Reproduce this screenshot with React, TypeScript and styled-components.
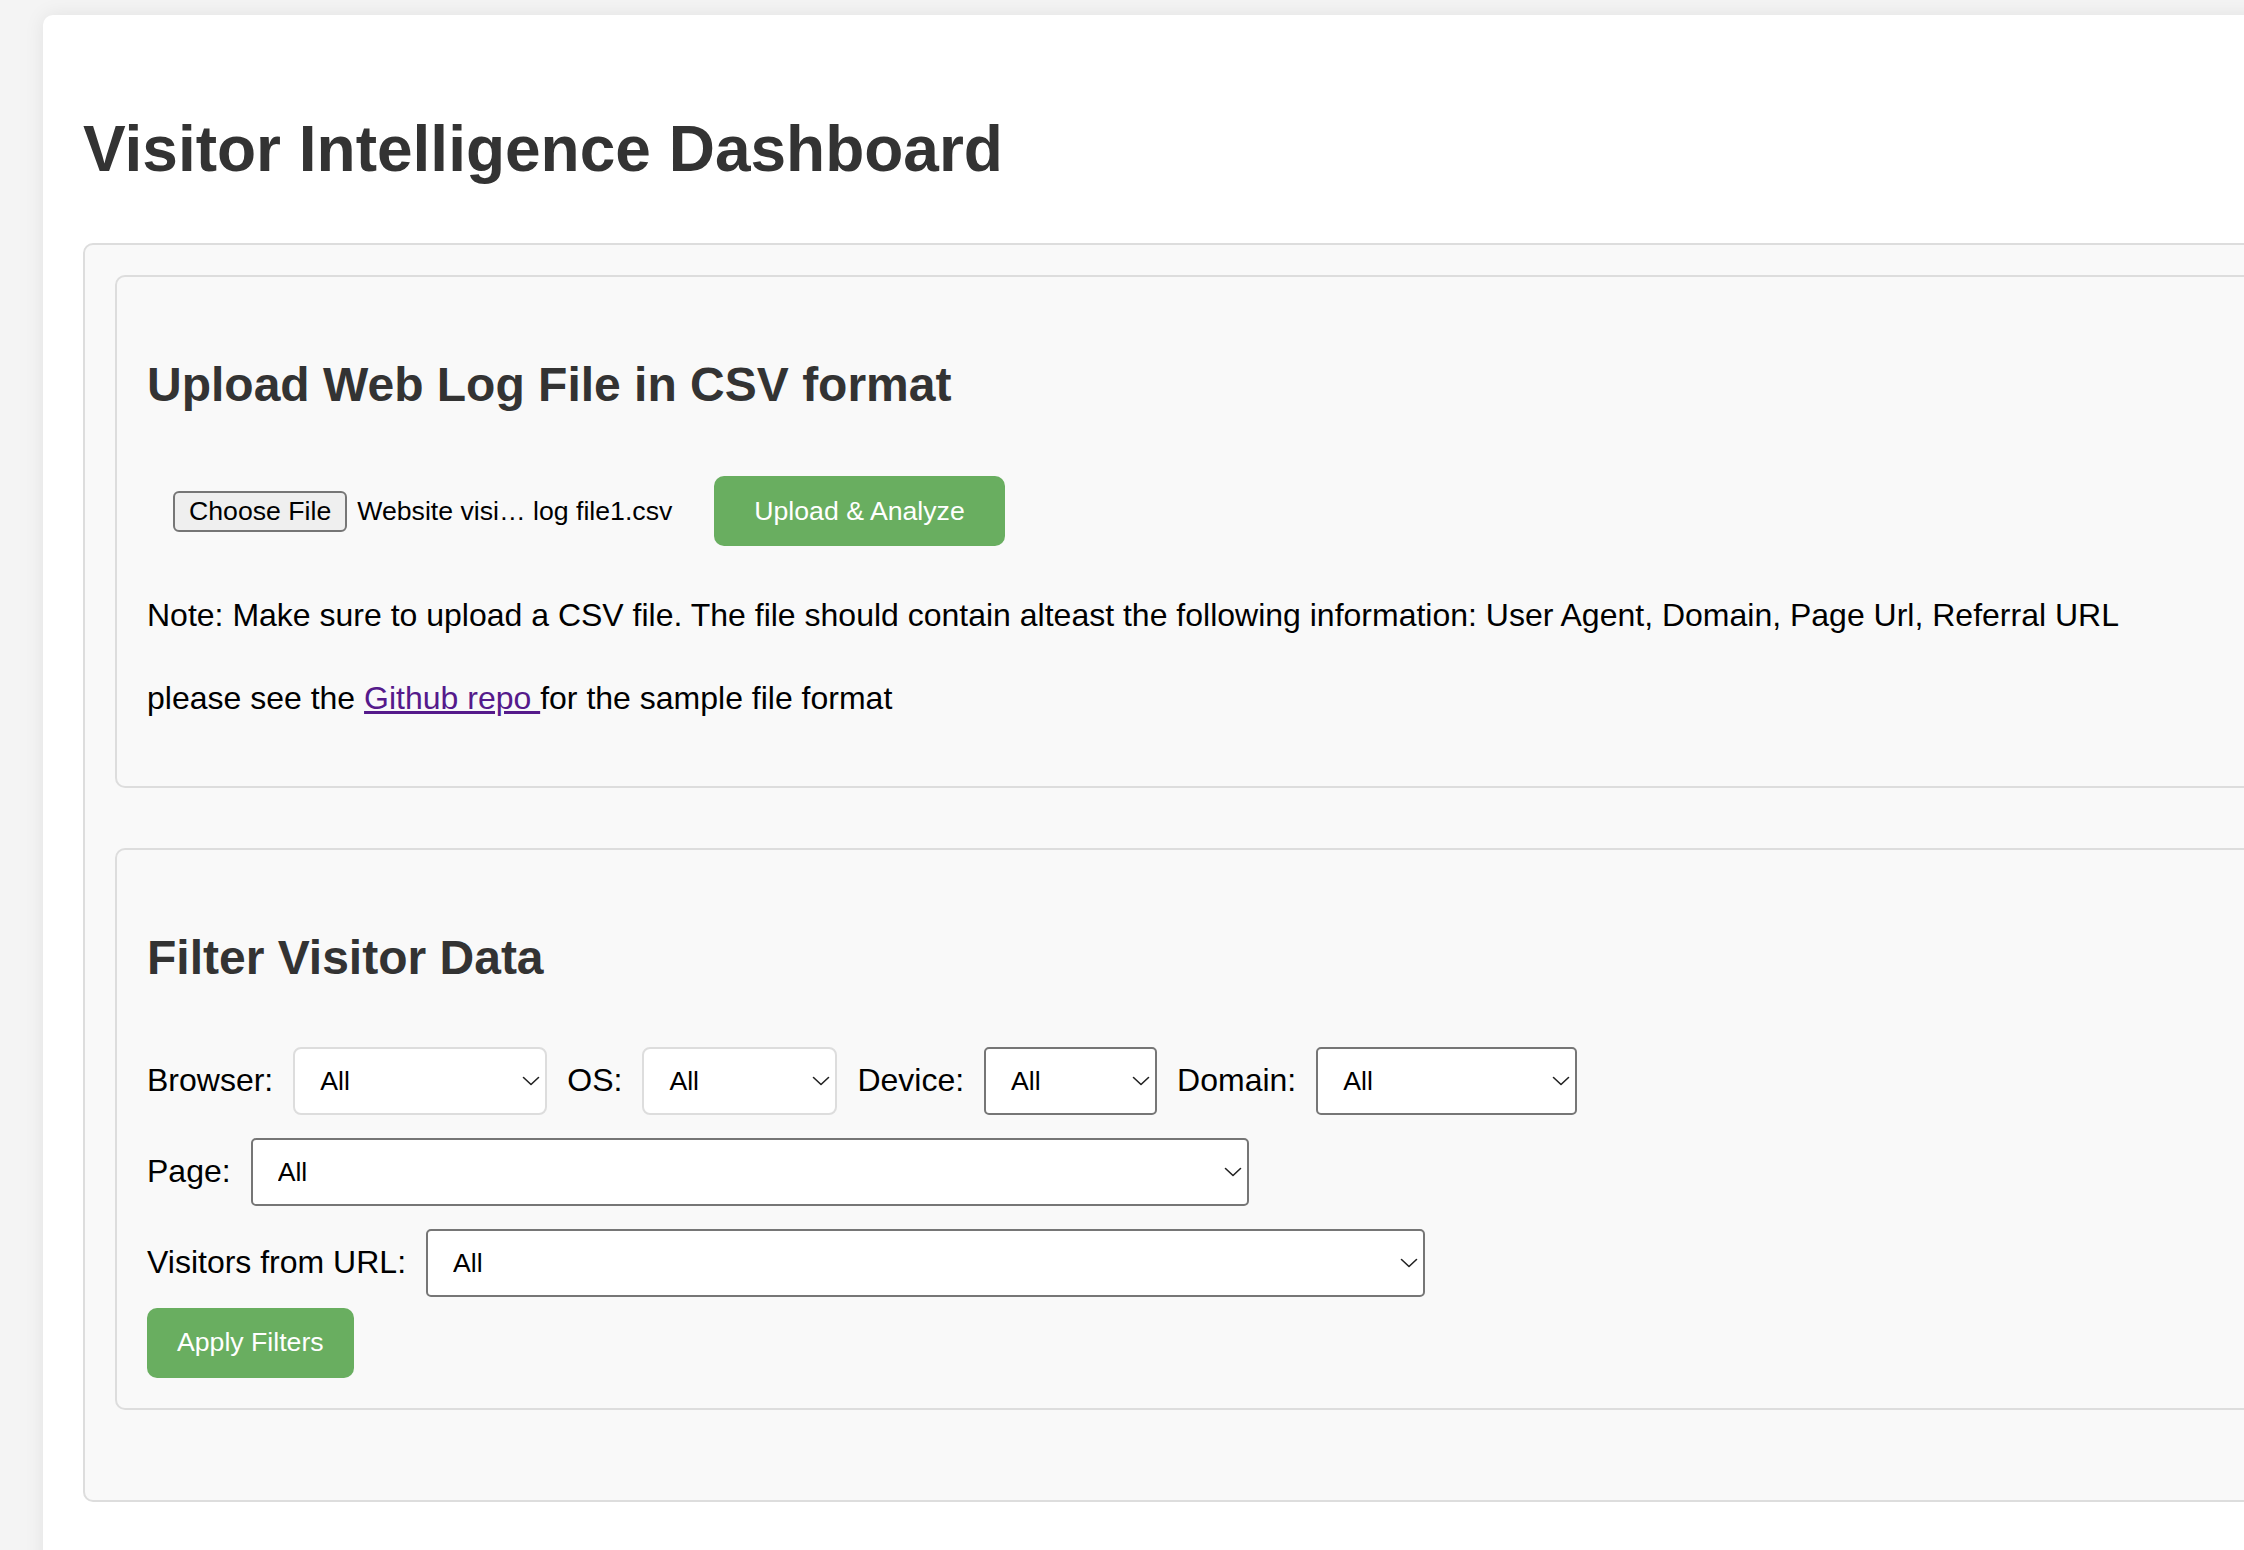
import styled, { createGlobalStyle } from "styled-components";

const GlobalStyle = createGlobalStyle`
  html, body {
    margin: 0;
    padding: 0;
    background: #f4f4f4;
    overflow: hidden;
  }
  body {
    font-family: "Liberation Sans", Arial, Helvetica, sans-serif;
    line-height: 1.6;
    color: #000;
  }
`;

interface FilterField {
  label: string;
  width: number;
  light?: boolean;
}

const filterRows: FilterField[][] = [
  [
    { label: "Browser:", width: 254, light: true },
    { label: "OS:", width: 195, light: true },
    { label: "Device:", width: 173 },
    { label: "Domain:", width: 261 },
  ],
  [{ label: "Page:", width: 998 }],
  [{ label: "Visitors from URL:", width: 999 }],
];

function Chevron(): JSX.Element {
  return (
    <ChevronIcon width="18" height="10" viewBox="0 0 18 10" fill="none">
      <path
        d="M1.5 1.5 L9 8.5 L16.5 1.5"
        stroke="#222"
        strokeWidth="1.6"
        strokeLinecap="round"
        strokeLinejoin="round"
      />
    </ChevronIcon>
  );
}

function FilterSelect({ width, light }: { width: number; light?: boolean }) {
  return (
    <SelectWrap>
      <Select $width={width} $light={light} defaultValue="All">
        <option>All</option>
      </Select>
      <Chevron />
    </SelectWrap>
  );
}

function App(): JSX.Element {
  return (
    <>
      <GlobalStyle />
      <Page>
        <Card>
          <Title>Visitor Intelligence Dashboard</Title>
          <Section>
            <Panel>
              <PanelHeading>Upload Web Log File in CSV format</PanelHeading>
              <UploadRow>
                <FilePicker>
                  <ChooseButton type="button">Choose File</ChooseButton>
                  <FileName>Website visi… log file1.csv</FileName>
                </FilePicker>
                <UploadButton type="button">Upload &amp; Analyze</UploadButton>
              </UploadRow>
              <Note>
                Note: Make sure to upload a CSV file. The file should contain
                alteast the following information: User Agent, Domain, Page Url,
                Referral URL
              </Note>
              <Note>
                please see the <RepoLink href="#">Github repo </RepoLink>for the
                sample file format
              </Note>
            </Panel>

            <Panel>
              <PanelHeading>Filter Visitor Data</PanelHeading>
              <FilterGrid>
                {filterRows.map((row, i) => (
                  <FilterRow key={i}>
                    {row.map((field) => (
                      <FieldGroup key={field.label}>
                        <FieldLabel>{field.label}</FieldLabel>
                        <FilterSelect width={field.width} light={field.light} />
                      </FieldGroup>
                    ))}
                  </FilterRow>
                ))}
              </FilterGrid>
              <ApplyButton type="button">Apply Filters</ApplyButton>
            </Panel>
          </Section>
        </Card>
      </Page>
    </>
  );
}

const Page = styled.div`
  padding: 15px 0 0 43px;
  min-height: 1550px;
  box-sizing: border-box;
`;

const Card = styled.div`
  width: 2400px;
  min-height: 1600px;
  box-sizing: border-box;
  padding: 40px;
  background: #ffffff;
  border-radius: 10px;
  box-shadow: 0 0 20px rgba(0, 0, 0, 0.08);
`;

const Title = styled.h1`
  margin: 42.88px 0;
  font-size: 64px;
  font-weight: bold;
  line-height: 1.6;
  color: #333333;
`;

const Section = styled.div`
  background: #f9f9f9;
  border: 2px solid #dddddd;
  border-radius: 10px;
  padding: 30px;
`;

const Panel = styled.div`
  background: #f9f9f9;
  border: 2px solid #dddddd;
  border-radius: 10px;
  padding: 30px;
  margin-bottom: 60px;
`;

const PanelHeading = styled.h2`
  margin: 39.84px 0;
  font-size: 48px;
  font-weight: bold;
  line-height: 1.6;
  color: #333333;
`;

const UploadRow = styled.div`
  display: flex;
  align-items: center;
  height: 93px;
  padding-top: 1px;
`;

const FilePicker = styled.div`
  display: flex;
  align-items: center;
  gap: 10px;
  padding-left: 26px;
`;

const ChooseButton = styled.button`
  height: 41px;
  padding: 0 14px;
  font-family: "Liberation Sans", Arial, sans-serif;
  font-size: 26.67px;
  line-height: 1;
  color: #000;
  background: #efefef;
  border: 2px solid #767676;
  border-radius: 6px;
`;

const FileName = styled.span`
  font-size: 26.67px;
  line-height: 1;
  color: #000;
`;

const GreenButton = styled.button`
  display: block;
  height: 70px;
  font-family: "Liberation Sans", Arial, sans-serif;
  font-size: 26.67px;
  color: #ffffff;
  background: #69ae60;
  border: none;
  border-radius: 10px;
`;

const UploadButton = styled(GreenButton)`
  padding: 0 40px;
  margin-left: 42px;
`;

const ApplyButton = styled(GreenButton)`
  padding: 0 30px;
  margin-top: 11px;
`;

const Note = styled.p`
  margin: 32px 0;
  font-size: 32px;
  line-height: 1.6;
  color: #000;
`;

const RepoLink = styled.a`
  color: #551a8b;
  text-decoration: underline;
`;

const FilterGrid = styled.div`
  display: flex;
  flex-direction: column;
  gap: 23px;
  padding-top: 10.5px;
`;

const FilterRow = styled.div`
  display: flex;
  align-items: center;
  height: 68px;
`;

const FieldGroup = styled.div`
  display: flex;
  align-items: center;
  margin-right: 20px;
`;

const FieldLabel = styled.label`
  margin-right: 20px;
  font-size: 32px;
  color: #000;
`;

const SelectWrap = styled.div`
  position: relative;
  display: flex;
`;

const Select = styled.select<{ $width: number; $light?: boolean }>`
  appearance: none;
  -webkit-appearance: none;
  width: ${(p) => p.$width}px;
  height: 68px;
  padding: 0 40px 0 25px;
  font-family: "Liberation Sans", Arial, sans-serif;
  font-size: 26.67px;
  color: #000;
  background: #ffffff;
  border: 2px solid ${(p) => (p.$light ? "#dddddd" : "#767676")};
  border-radius: ${(p) => (p.$light ? "8px" : "5px")};
  outline: none;
`;

const ChevronIcon = styled.svg`
  position: absolute;
  right: 7px;
  top: 50%;
  transform: translateY(-50%);
  pointer-events: none;
`;

export default App;
